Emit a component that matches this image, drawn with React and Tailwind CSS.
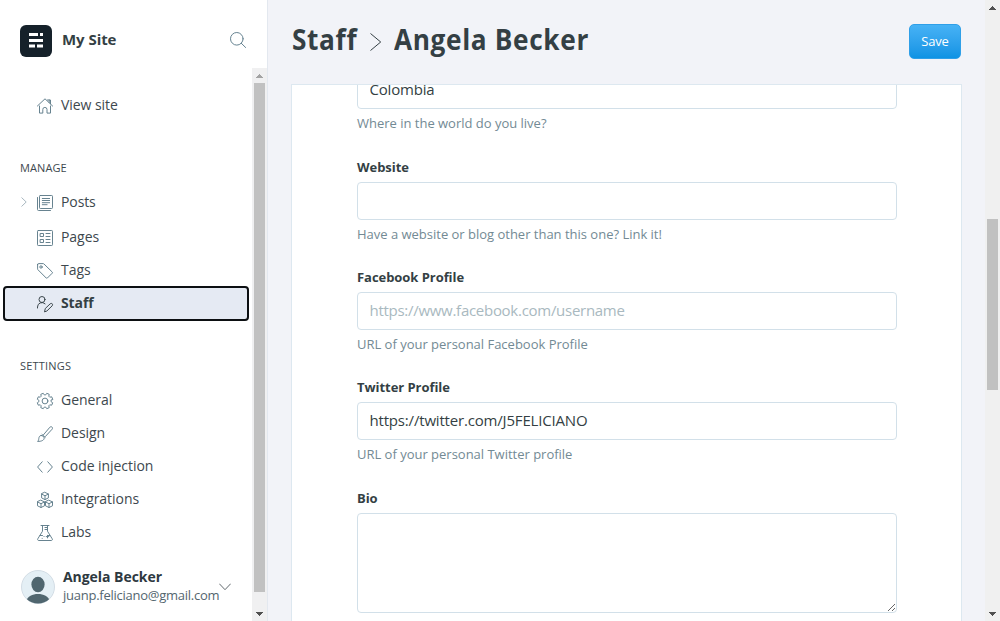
function Icon({ children, className = "" }) {
  return (
    <svg viewBox="0 0 16 16" width="16" height="16" fill="none" stroke="currentColor" strokeWidth="0.95" strokeLinecap="round" strokeLinejoin="round" className={"shrink-0 overflow-visible " + className}>
      {children}
    </svg>
  );
}

// Outline of an eight-toothed cog with its notches on the axes.
function cogPath() {
  const points = [];
  for (let k = 0; k < 8; k++) {
    const base = k * 45;
    for (const [offset, radius] of [[-6, 6.1], [6, 6.1], [13, 7.9], [32, 7.9]]) {
      const a = ((base + offset) * Math.PI) / 180;
      points.push((8 + radius * Math.cos(a)).toFixed(2) + " " + (8 + radius * Math.sin(a)).toFixed(2));
    }
  }
  return "M" + points.join("L") + "Z";
}

const icons = {
  home: (
    <>
      <path d="M.4 8 8 .8 15.6 8" />
      <path d="M2.5 8v7.1h3.3v-3.600a2.100 2.100 0 0 1 4.200 0v3.600h3.500V8M10.500 2h3v3.800M12.200 2v2.500" />
    </>
  ),
  posts: (
    <>
      <rect x="2.5" y=".5" width="13" height="13" rx=".8" />
      <path d="M.5 2.5v12a1 1 0 0 0 1 1h12M5.3 3.5h7.3M5.3 5.5h7.3M5.3 7.7h7.3M5.3 9.700h4.800" />
    </>
  ),
  pages: (
    <>
      <rect x=".5" y=".5" width="15" height="15" rx=".8" />
      <path d="M3.5 3.5h3v3h-3zM3.5 9.500h3v3h-3zM9 3.500h4M9 6.500h4M9 9.500h4M9 12.500h4" />
    </>
  ),
  tags: (
    <>
      <path d="M.6 1.4v4.5c0 .4.1.6.4.9l8.2 8.2c.4.4.8.4 1.2 0l4.8-4.8c.4-.4.4-.8 0-1.2L7 1c-.3-.3-.5-.4-.9-.4H1.4a.8.8 0 0 0-.8.8Z" />
      <circle cx="4" cy="4" r="1.2" />
    </>
  ),
  staff: (
    <>
      <circle cx="5" cy="3.5" r="3" />
      <path d="M.5 12V11a4.500 4.500 0 0 1 7.600-3.200M7.600 15.500l.7-3 4.900-4.700c1.500-1.200 3.200.5 2 2l-5 4.900Z" />
    </>
  ),
  general: (
    <>
      <path d={cogPath()} />
      <circle cx="8" cy="8" r="2.9" />
    </>
  ),
  design: (
    <>
      <path d="M6.300 9 12.900 1.200c1.400-1.400 3.500.4 2.200 2L8.400 10.500M5 8.400l3.200 3" />
      <path d="M4.100 9.500c1.500 0 3 1.100 3.100 2.500 0 2.200-2.600 3.500-6.600 3.400 1.300-1 1-2.200 1.400-3.900.2-.9 1-2 2.100-2Z" />
    </>
  ),
  code: <path d="M5.200 2.800.6 8l4.600 5.200M10.800 2.800 15.400 8l-4.600 5.200" />,
  integrations: (
    <>
      <path d="m8 .4 3.400 1.600v3.900L8 7.600 4.600 5.900V2ZM4.600 2 8 3.800 11.400 2M8 3.800v3.800" />
      <path d="m4 8.300 3.500 1.600v3.900L4 15.500.5 13.800V9.900ZM.5 9.900 4 11.700l3.500-1.800M4 11.700v3.800" />
      <path d="m12 8.300 3.500 1.600v3.900L12 15.500l-3.500-1.700V9.900ZM8.500 9.900l3.500 1.800 3.500-1.800M12 11.700v3.800" />
    </>
  ),
  labs: (
    <>
      <path d="M4 .5h8M5.500.5v5.700L.8 13.800c-.5.9-.1 1.700.9 1.700h12.600c1 0 1.400-.8.900-1.700L10.500 6.200V.5M8 2.500h2.500M8 4.500h2.500M3 10.500h2.500M12.700 10.500H11" />
      <path d="M10.500 10.300v2.600M9.200 11.600h2.600M7 11.400v.1M5.200 13.300v.1" />
    </>
  ),
};

function NavItem({ icon, label, expandable, tall, active }) {
  if (active) {
    return (
      <div className="mx-[3px] -mb-0.5 flex h-[35px] items-center rounded-[4px] border-2 border-[#0c0f12] bg-[#e5eaf3] pl-8 font-bold text-[#343f44]">
        <Icon>{icons[icon]}</Icon>
        <span className="-mt-0.5 ml-2 tracking-[-0.1px]">{label}</span>
      </div>
    );
  }
  return (
    <div className={(tall ? "h-9" : "h-[33px]") + " flex items-center pl-5"}>
      <span className="w-[17px] text-[#9fb0b9]">
        {expandable && (
          <svg viewBox="0 0 8 10" width="8" height="10" fill="none" stroke="currentColor" strokeWidth="0.9"><path d="m1.5.5 4.700 4.500-4.700 4.500" /></svg>
        )}
      </span>
      <Icon className={tall ? "mt-px text-[#5f7c8a]" : "mt-0.5 text-[#5f7c8a]"}>{icons[icon]}</Icon>
      <span className={tall ? "-mt-0.5 ml-2 tracking-[-0.1px]" : "ml-2 tracking-[-0.05px]"}>{label}</span>
    </div>
  );
}

function Arrow({ down, className = "" }) {
  return (
    <svg width="15" height="15" viewBox="0 0 15 15" fill="currentColor" shapeRendering="crispEdges" className={className}>
      <path d={down ? "M4 6h7L7.5 10Z" : "M4 10h7L7.5 6Z"} />
    </svg>
  );
}

function Sidebar() {
  return (
    <aside className="flex w-[268px] shrink-0 flex-col border-r border-[#e3e8ef] bg-white">
      <header className="flex h-[68px] shrink-0 items-center pl-5 pr-[21px] pt-3.5 pb-0.5">
        <div className="mt-px flex size-8 items-center justify-center rounded-[6px] bg-[#15212a]">
          <svg width="14" height="15" viewBox="0 0 14 15" fill="#fff">
            <path d="M0 0h9v3H0zM11 0h3v3h-3zM0 6h14v3H0zM0 11.500h6v3H0zM8 11.500h6v3H8z" />
          </svg>
        </div>
        <span className="-mt-0.5 ml-2.5 text-[15px] font-bold tracking-[-0.05px] text-[#343f44]">My Site</span>
        <svg viewBox="0 0 16 16" width="16" height="16" fill="none" stroke="#668391" strokeWidth="1" strokeLinecap="round" className="ml-auto overflow-visible">
          <circle cx="6.8" cy="6.8" r="6.3" />
          <path d="m11.300 11.300 4.300 4.200" />
        </svg>
      </header>
      <div className="flex min-h-0 flex-1">
        <nav className="w-[252px] pt-5 text-[14px] text-[#3d484e]">
          <NavItem icon="home" label="View site" />
          <h4 className="mt-[37px] flex h-5 items-center pl-5 text-[11px] tracking-[0.1px]">MANAGE</h4>
          <div className="mt-[6px]">
            <NavItem icon="posts" label="Posts" tall expandable />
            <NavItem icon="pages" label="Pages" />
            <NavItem icon="tags" label="Tags" />
            <NavItem icon="staff" label="Staff" active />
          </div>
          <h4 className="mt-[37px] flex h-5 items-center pl-5 text-[11px] tracking-[0.2px]">SETTINGS</h4>
          <div className="mt-[7px]">
            <NavItem icon="general" label="General" />
            <NavItem icon="design" label="Design" />
            <NavItem icon="code" label="Code injection" />
            <NavItem icon="integrations" label="Integrations" />
            <NavItem icon="labs" label="Labs" />
          </div>
          <div className="mt-5 flex h-9 items-center pl-[21px]">
            <svg width="34" height="34" viewBox="0 0 34 34" className="mt-0.5 shrink-0">
              <defs><clipPath id="face"><circle cx="17" cy="17" r="16.5" /></clipPath></defs>
              <circle cx="17" cy="17" r="16.5" fill="#e4eff5" stroke="#d3dde5" />
              <g clipPath="url(#face)" fill="#50666f">
                <ellipse cx="17" cy="14.5" rx="6.6" ry="7.8" />
                <path d="M5 31c1.500-4.600 6.500-7 12-7s10.500 2.400 12 7l-3 3H8Z" />
              </g>
            </svg>
            <div className="ml-2 w-[156px]">
              <div className="h-[18px] text-[14px] leading-[18px] font-bold tracking-[-0.05px] text-[#2e393f]">Angela Becker</div>
              <div className="h-[18px] whitespace-nowrap text-[13px] leading-[18px] tracking-[-0.25px] text-[#54666f]">juanp.feliciano@gmail.com</div>
            </div>
            <svg width="12" height="8" viewBox="0 0 12 8" fill="none" stroke="#50595f" strokeWidth="0.9" className="mt-0.5 shrink-0"><path d="m.3.7 5.700 6 5.700-6" /></svg>
          </div>
        </nav>
        <div className="flex w-[15px] flex-col items-center bg-[#f0f0f1]">
          <Arrow className="shrink-0 text-[#a3a3a3]" />
          <div className="h-[509px] w-[11px] bg-[#c1c1c1]" />
          <Arrow down className="mt-auto text-[#505050]" />
        </div>
      </div>
    </aside>
  );
}

function Field({ label, help, children }) {
  return (
    <div className="flex flex-col">
      <label className="mb-[3px] flex h-[22px] items-center text-[13px] font-bold tracking-[-0.05px] text-[#343f44]">{label}</label>
      {children}
      {help && <Help>{help}</Help>}
    </div>
  );
}

function Help({ children }) {
  return <p className="mt-[5px] flex h-5 items-center text-[13px] tracking-[-0.01px] text-[#738a94]">{children}</p>;
}

const inputClass = "block h-[38px] w-full rounded-[4px] border border-[#d2e0e9] bg-white pr-3 pb-0.5 pl-[11.5px] text-[15px] tracking-[-0.18px] text-[#343f44] outline-none placeholder:text-[#a9b9c0] placeholder:tracking-[-0.28px] placeholder:opacity-100";

export default function App() {
  return (
    <div className="flex h-[621px] w-[1000px] overflow-hidden bg-[#f2f3f8] font-['Open_Sans',sans-serif]">
      <Sidebar />
      <main className="flex min-w-0 flex-1 flex-col pl-[23px] pr-[23px]">
        <header className="flex h-[84px] shrink-0 items-center justify-between pr-px pb-0.5">
          <h1 className="flex h-10 items-center pl-px text-[29px] leading-10 font-bold tracking-[0.7px] whitespace-nowrap text-[#343f44]">
            <span className="-mt-1 w-[65px] origin-left scale-x-[0.905]">Staff</span>
            <svg width="12" height="18" viewBox="0 0 12 18" fill="none" stroke="#343f44" strokeWidth="1" className="mt-0.5 mr-3 ml-[13px]"><path d="m.5.5 10.200 8.500L.5 17.500" /></svg>
            <span className="-mt-1 origin-left scale-x-[0.905]">Angela Becker</span>
          </h1>
          <button className="h-[35px] w-[52px] rounded-[5px] border border-[#2f9fe8] bg-linear-to-b from-[#46b2f5] to-[#0d93e4] pt-0.5 text-[13px] tracking-[-0.2px] text-white">Save</button>
        </header>
        <section className="flex min-h-0 w-[671px] flex-1 flex-col overflow-hidden border border-b-0 border-[#dde8f0] bg-white pr-[64px] pl-[65px]">
          <div className="flex h-6 w-full shrink-0 items-end overflow-hidden">
            <input className={inputClass + " shrink-0"} defaultValue="Colombia" />
          </div>
          <Help>Where in the world do you live?</Help>
          <div className="mt-[23px] flex flex-col gap-[22px]">
            <Field label="Website" help="Have a website or blog other than this one? Link it!">
              <input className={inputClass} />
            </Field>
            <Field label="Facebook Profile" help="URL of your personal Facebook Profile">
              <input className={inputClass} placeholder="https://www.facebook.com/username" />
            </Field>
            <Field label="Twitter Profile" help="URL of your personal Twitter profile">
              <input className={inputClass} defaultValue="https://twitter.com/J5FELICIANO" />
            </Field>
            <div className="mt-px">
              <Field label="Bio">
                <textarea className="block h-[100px] w-full resize-y rounded-[4px] border border-[#d2e0e9] bg-white outline-none" />
              </Field>
            </div>
          </div>
        </section>
      </main>
      <div className="flex w-[15px] shrink-0 flex-col items-center bg-[#f0f0f0]">
        <Arrow className="shrink-0 text-[#505050]" />
        <div className="mt-[204px] h-[171px] w-[11px] bg-[#c1c1c1]" />
        <Arrow down className="mt-auto text-[#505050]" />
      </div>
    </div>
  );
}
